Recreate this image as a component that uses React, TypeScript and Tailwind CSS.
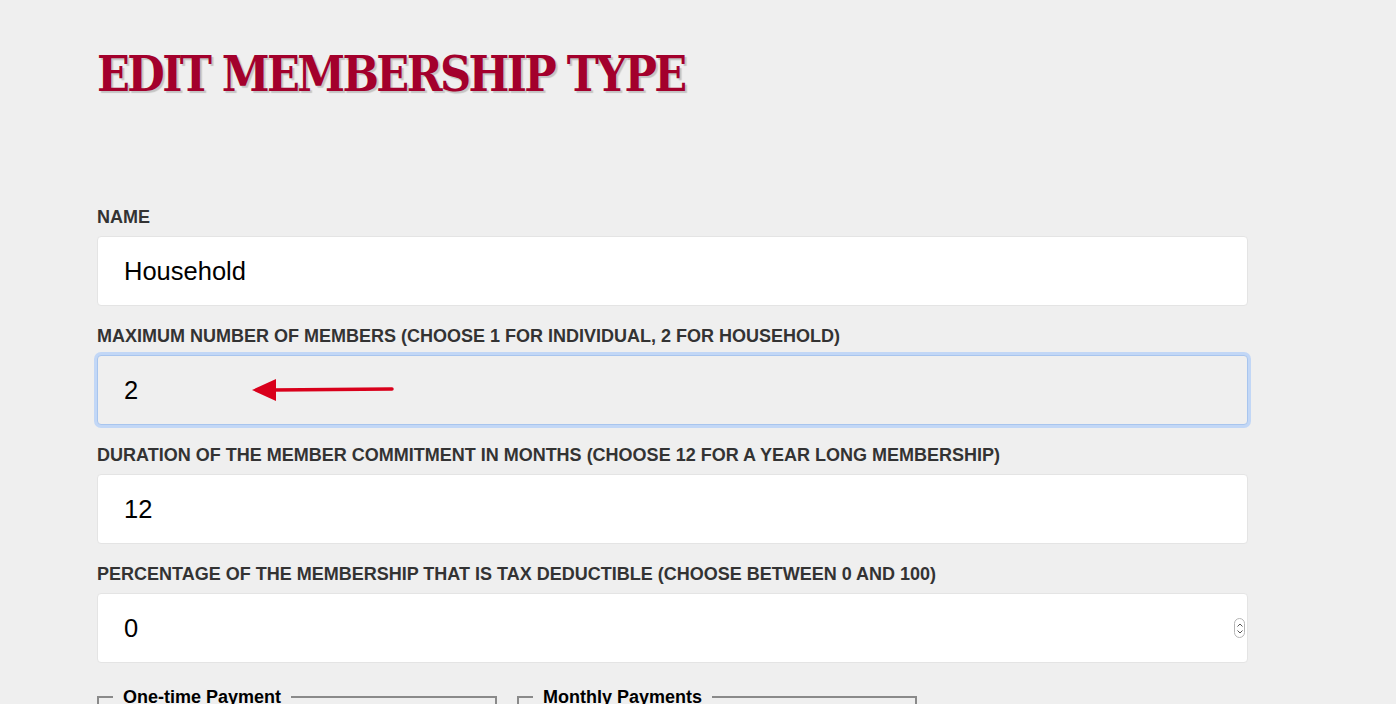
import React from "react";

const fields = [
  { label: "Name", value: "Household" },
  { label: "Maximum number of members (choose 1 for individual, 2 for household)", value: "2", focused: true },
  { label: "Duration of the member commitment in months (choose 12 for a year long membership)", value: "12" },
  { label: "Percentage of the membership that is tax deductible (choose between 0 and 100)", value: "0", spinner: true },
];

function Arrow() {
  return (
    <svg className="absolute left-[155px] top-[22px]" width="142" height="26" viewBox="0 0 142 26">
      <path d="M20 13 L140 12" stroke="#d9001b" strokeWidth="3.5" strokeLinecap="round" />
      <path d="M0 13 L24 2 L24 24 Z" fill="#d9001b" />
    </svg>
  );
}

function Spinner() {
  return (
    <div className="absolute right-[3px] top-[25px] w-[11px] h-[20px] rounded-full border border-[#b5b5b5] bg-white flex flex-col items-center justify-center gap-[3px]">
      <svg width="6" height="4" viewBox="0 0 6 4"><path d="M0.5 3.5 L3 1 L5.5 3.5" stroke="#555" strokeWidth="1" fill="none" /></svg>
      <svg width="6" height="4" viewBox="0 0 6 4"><path d="M0.5 0.5 L3 3 L5.5 0.5" stroke="#555" strokeWidth="1" fill="none" /></svg>
    </div>
  );
}

export default function App() {
  return (
    <div className="min-h-screen bg-[#efefef] pl-[97px] pr-[148px] pt-[46px] font-['Liberation_Sans',Arial,sans-serif]">
      <h1 className="font-['DejaVu_Serif',serif] font-bold uppercase text-[#a3002c] text-[48px] leading-[56px] tracking-[-2.6px] [font-stretch:condensed] [text-shadow:2px_2px_1px_rgba(0,0,0,0.18)]">
        Edit Membership Type
      </h1>

      <form className="mt-[105px] flex flex-col gap-[20px]">
        {fields.map((f) => (
          <div key={f.label} className="flex flex-col">
            <label className="uppercase font-bold text-[18px] leading-[20px] text-[#333] mb-[9px]">{f.label}</label>
            <div className="relative">
              <input
                readOnly
                value={f.value}
                className={
                  f.focused
                    ? "w-full h-[70px] px-[26px] text-[25.5px] text-black bg-[#efefef] rounded-[4px] border border-[#a8c5ee] outline-none ring-[3px] ring-[#c2d7f6]"
                    : "w-full h-[70px] px-[26px] text-[25.5px] text-black bg-white rounded-[4px] border border-[#e4e4e4] outline-none"
                }
              />
              {f.focused && <Arrow />}
              {f.spinner && <Spinner />}
            </div>
          </div>
        ))}
      </form>

      <div className="mt-[24px] flex gap-[20px]">
        <fieldset className="w-[400px] h-[140px] border-2 border-[#8a8a8a] px-[14px]">
          <legend className="px-[10px] font-bold text-[18px] leading-[20px] text-black">One-time Payment</legend>
        </fieldset>
        <fieldset className="w-[400px] h-[140px] border-2 border-[#8a8a8a] px-[14px]">
          <legend className="px-[10px] font-bold text-[18px] leading-[20px] text-black">Monthly Payments</legend>
        </fieldset>
      </div>
    </div>
  );
}
